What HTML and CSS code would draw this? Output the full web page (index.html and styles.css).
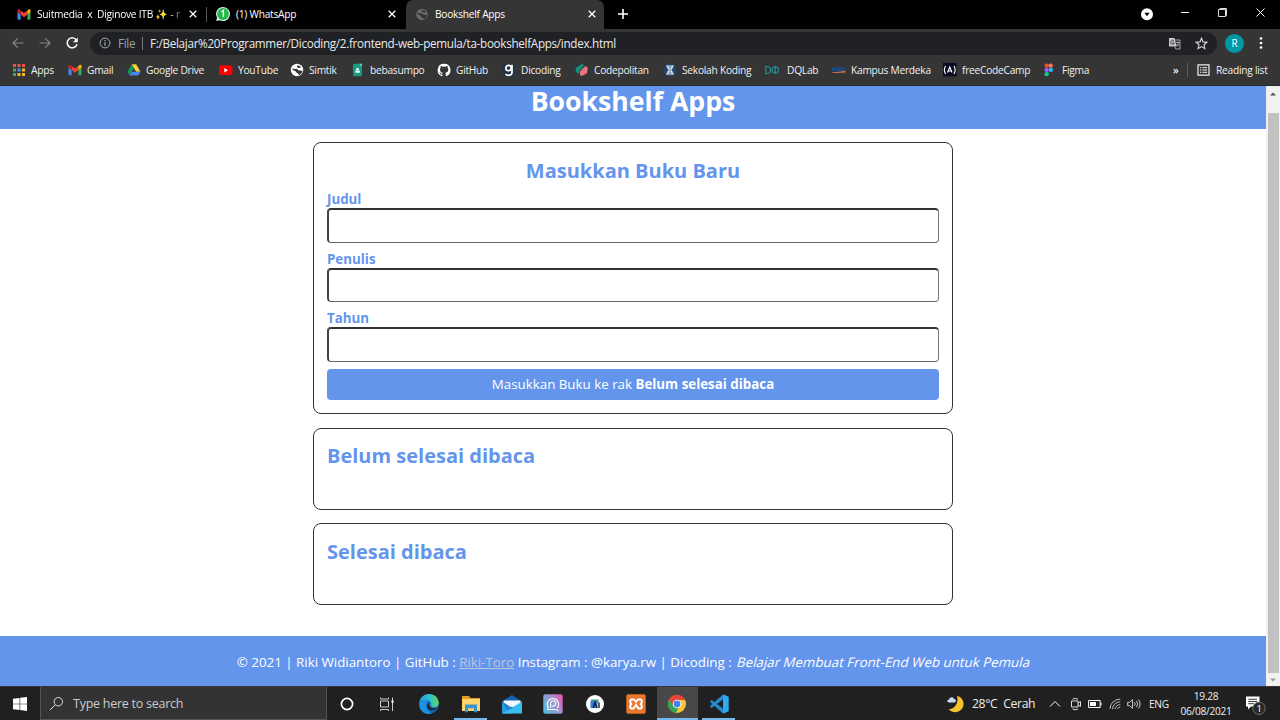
FILE: index.html
```html
<!DOCTYPE html>
<html lang="id">
<head>
<meta charset="utf-8">
<title>Bookshelf Apps</title>
<link rel="stylesheet" href="styles.css">
</head>
<body>
<svg class="defs" aria-hidden="true">
  <symbol id="gmail" viewBox="0 0 14 12"><path fill="#4285f4" d="M.5 3.5 3.6 6v5.2H1.4a.9.9 0 0 1-.9-.9z"/><path fill="#34a853" d="M10.4 6l3.1-2.5v6.8a.9.9 0 0 1-.9.9h-2.2z"/><path fill="#ea4335" d="M3.6 6V2l3.4 2.6L10.4 2v4L7 8.7z"/><path fill="#c5221f" d="M.5 3.8V2.2C.5.7 1.9.4 2.8 1.300l.8.7v4z"/><path fill="#fbbc04" d="M13.5 3.800V2.2c0-1.500-1.400-1.800-2.300-.9l-.8.7v4z"/></symbol>
  <symbol id="globe" viewBox="0 0 14 14"><circle class="globe-disc" cx="7" cy="7" r="6.200"/><path class="globe-land" d="M2.200 5.200c1.200 0 2 1 3.300.7 1.400-.3 1.800.3 2.500 1 1 .9 3.400 0 4.400 1.200-.5 2-1.700 3.400-3.400 4.200-.3-1.100-.6-2-1.900-2.200-1.400-.3-.7-1.600-1.800-2C4 7.600 2.600 7.200 2.200 5.200zM7.200 2.500c1.500-.3 3 .6 3.900 1.700L9 4.900c-1 .2-2.700-1.200-1.800-2.400z"/></symbol>
  <symbol id="close" viewBox="0 0 10 10"><path fill="none" stroke="#fff" stroke-width="1.250" d="M1.700 1.700l6.600 6.600m0-6.600L1.700 8.300"/></symbol>
</svg>

<div class="tabstrip">
  <div class="tab tab-mail"><svg class="ic"><use href="#gmail"/></svg><span class="tab-title fade">Suitmedia &nbsp;x&nbsp; Diginove ITB ✨ - r</span><svg class="x"><use href="#close"/></svg></div>
  <div class="tab tab-wa"><svg class="ic" viewBox="0 0 14 14"><path fill="#d9f5e0" d="M7 0a7 7 0 1 1-3.300 13.200L.2 14l.9-3.400A7 7 0 0 1 7 0z"/><circle cx="7" cy="7" r="5.900" fill="#25b84c"/><path d="M5.600 4.600 7.400 3.500V10" stroke="#fff" stroke-width="1.300" fill="none"/></svg><span class="tab-title">(1) WhatsApp</span><svg class="x"><use href="#close"/></svg></div>
  <div class="tab tab-active"><svg class="ic dim"><use href="#globe"/></svg><span class="tab-title">Bookshelf Apps</span><svg class="x"><use href="#close"/></svg></div>
  <svg class="newtab" viewBox="0 0 12 12"><path d="M6 1v10M1 6h10" stroke="#fff" stroke-width="1.600"/></svg>
  <div class="winctl">
    <svg viewBox="0 0 14 14" class="w-media"><circle cx="7" cy="7.300" r="6" fill="#fff"/><path d="M4.400 5.700h5.200L7 9.200z" fill="#000"/></svg>
    <svg viewBox="0 0 14 14" class="w-min"><path d="M3 6.500h8" stroke="#fff"/></svg>
    <svg viewBox="0 0 14 14" class="w-max"><path d="M2.500 3.500h7v7h-7zM4 3.500V2.500h6.500v7H9.700" fill="none" stroke="#ddd"/></svg>
    <svg viewBox="0 0 14 14" class="w-close"><path d="M3.500 2.500l8 8m0-8l-8 8" stroke="#fff" fill="none"/></svg>
  </div>
</div>

<div class="toolbar">
  <svg class="nav" viewBox="0 0 14 14"><path d="M12.500 7H2M6.700 2.300 2 7l4.700 4.700" fill="none" stroke="#85878a" stroke-width="1.200"/></svg>
  <svg class="nav" viewBox="0 0 14 14"><path d="M1.500 7H12M7.300 2.300 12 7l-4.700 4.700" fill="none" stroke="#85878a" stroke-width="1.200"/></svg>
  <svg class="nav" viewBox="0 0 14 14"><path d="M11.600 4.400A5 5 0 1 0 12 8.300" fill="none" stroke="#fff" stroke-width="1.500"/><path d="M12.700 1.500v4.800H7.900z" fill="#fff"/></svg>
  <div class="omnibox">
    <svg class="info" viewBox="0 0 12 12"><circle cx="6" cy="6" r="4.900" fill="none" stroke="#a5a8ac"/><path d="M6 5.200v3.600M6 3.100v1.100" stroke="#a5a8ac" stroke-width="1.200"/></svg>
    <span class="scheme">File</span><span class="bar"></span><span class="url">F:/Belajar%20Programmer/Dicoding/2.frontend-web-pemula/ta-bookshelfApps/index.html</span>
    <svg class="translate" viewBox="0 0 13 13"><path d="M1 1h5.500l2.200 8.500H1z" fill="#c4c6c9"/><path d="M6.800 3H12v9H7.800l-1-2.500" fill="none" stroke="#a5a7aa"/><path d="M6 4.100A1.900 1.900 0 1 0 6.300 6H4.500" fill="none" stroke="#333" stroke-width=".9"/><path d="M8 5.500h3.300M9.700 4.500v1M10.700 5.700c-.2 1.600-1 2.500-2.200 3.200M8.700 7l2.200 2.500" fill="none" stroke="#c4c6c9" stroke-width=".8"/></svg>
    <svg class="star" viewBox="0 0 13 13"><path d="M6.500 1.200 8 4.900l4 .3-3 2.600.9 3.900-3.400-2.100-3.400 2.100L4 7.800 1 5.200l4-.3z" fill="none" stroke="#d8dadd" stroke-width="1.100"/></svg>
  </div>
  <span class="avatar">R</span>
  <svg class="dots" viewBox="0 0 4 14"><g fill="#fff"><circle cx="2" cy="2.500" r="1.300"/><circle cx="2" cy="7" r="1.300"/><circle cx="2" cy="11.500" r="1.300"/></g></svg>
</div>

<div class="bookmarks">
  <div class="bm"><svg viewBox="0 0 14 14"><g fill="#e65345"><path d="M1 1h3v3H1zM5.500 1h3v3h-3zM10 1h3v3h-3z"/></g><path fill="#4aa35a" d="M1 5.500h3v3H1z"/><path fill="#4a8ff0" d="M5.500 5.500h3v3h-3z"/><path fill="#efb52e" d="M10 5.500h3v3h-3zM10 10h3v3h-3zM5.500 10h3v3h-3z"/><path fill="#4aa35a" d="M1 10h3v3H1z"/></svg>Apps</div>
  <div class="bm"><svg><use href="#gmail"/></svg>Gmail</div>
  <div class="bm"><svg viewBox="0 0 14 14"><path fill="#0f9d58" d="M4.800 1.300 7 5 2.700 12.500.5 8.700z"/><path fill="#ffcd40" d="M4.800 1.300h4.400l4.300 7.400H9.100z"/><path fill="#4285f4" d="M4.900 8.700h8.600l-2.200 3.800H2.700z"/></svg>Google Drive</div>
  <div class="bm"><svg viewBox="0 0 14 14"><rect y="2.300" width="13.500" height="9.800" rx="2.500" fill="#f00"/><path d="M5.300 5v4.400L9 7.200z" fill="#fff"/></svg>YouTube</div>
  <div class="bm"><svg class="bright"><use href="#globe"/></svg>Simtik</div>
  <div class="bm"><svg viewBox="0 0 14 14"><rect x="2" y=".7" width="9" height="12.600" rx="1" fill="#159a80"/><path d="M8 .7h3v3z" fill="#70d0b5"/><path d="M6.500 4.300 8.400 7H4.600zM4.300 7.500h4.500v2.200H4.300z" fill="#e8fff8"/></svg>bebasumpo</div>
  <div class="bm"><svg viewBox="0 0 16 16"><path fill="#fff" d="M8 .8a7.300 7.300 0 0 0-2.300 14.200c.4.100.5-.2.500-.4v-1.400c-2 .4-2.500-.9-2.500-.9-.4-.9-.9-1.100-.9-1.100-.7-.5.100-.5.100-.5.800.1 1.200.8 1.200.8.700 1.200 1.800.8 2.200.6.100-.5.300-.8.500-1-1.700-.2-3.400-.8-3.400-3.600 0-.8.300-1.500.8-2-.1-.2-.4-1 .1-2 0 0 .6-.2 2 .8a7 7 0 0 1 3.700 0c1.400-1 2-.8 2-.8.4 1 .1 1.800.1 2 .5.500.8 1.200.8 2 0 2.800-1.700 3.400-3.400 3.600.3.200.5.700.5 1.400v2.100c0 .2.100.5.500.4A7.300 7.300 0 0 0 8 .8z"/></svg>GitHub</div>
  <div class="bm"><svg viewBox="0 0 14 14"><rect x=".5" y=".5" width="13" height="13" fill="#263449"/><circle cx="6.500" cy="5" r="2.700" fill="none" stroke="#fff" stroke-width="1.700"/><path d="M10 1.700v7.500c0 3.700-4.800 3.800-6.500 2" fill="none" stroke="#fff" stroke-width="1.700"/></svg>Dicoding</div>
  <div class="bm"><svg viewBox="0 0 14 14"><path fill="#178d7c" d="M7 .7 9 2.600 4.200 8.500 3.800 11 .8 9V5z"/><path fill="#e9737e" d="M10.500 2.700 12.800 5 12 10.300 6.300 13.300 4.800 11 5 8.500z"/></svg>Codepolitan</div>
  <div class="bm"><svg viewBox="0 0 14 14"><circle cx="7" cy="7" r="6.500" fill="#20466c"/><path d="M3 3h8M4 5h6M3 11h8M4 9h6M4.500 3l1.700 4-1.700 4M9.500 3 7.800 7l1.700 4" fill="none" stroke="#e6edf4" stroke-width="1.200"/></svg>Sekolah Koding</div>
  <div class="bm bm-dq"><svg viewBox="0 0 17 14"><g fill="none" stroke="#218f93" stroke-width="1.200"><path d="M.8 3.500v7h1.200c4.800 0 4.800-7 0-7z"/><circle cx="10.300" cy="7" r="3.200"/><path d="M10.300 3v8"/></g></svg>DQLab</div>
  <div class="bm"><svg viewBox="0 0 14 14"><path d="M0 4.500h13.500v3.200L0 8.500z" fill="#1d477f"/><path d="M0 9.500 13.500 8v1.500L0 10z" fill="#e67f48"/></svg>Kampus Merdeka</div>
  <div class="bm"><svg viewBox="0 0 14 14"><rect width="13.500" height="13.500" fill="#0a0a23"/><path d="M2.500 3q-2.300 4 0 8M11 3q2.300 4 0 8M4.500 9.500 6.800 4 9 9.500M5.400 8h2.800" fill="none" stroke="#fff" stroke-width="1.100"/></svg>freeCodeCamp</div>
  <div class="bm"><svg viewBox="0 0 14 14"><rect x="1.500" y=".5" width="4.300" height="4.300" rx="2" fill="#f24e1e"/><rect x="5.500" y=".5" width="4.300" height="4.300" rx="2" fill="#ff7262"/><rect x="1.500" y="4.700" width="4.300" height="4.300" rx="2" fill="#a259ff"/><circle cx="7.900" cy="6.900" r="2.100" fill="#1abcfe"/><rect x="1.500" y="9" width="4.300" height="4.300" rx="2" fill="#0acf83"/></svg>Figma</div>
  <div class="more">»</div>
  <div class="bm reading"><svg viewBox="0 0 14 14"><path d="M1 1.800h11v10.400H1z" fill="none" stroke="#eee" stroke-width="1.200"/><path d="M3 4.700h1.500M3 7h1.500M3 9.300h1.500M5.500 4.700h4.600M5.500 7h4.600M5.500 9.300h4.600" stroke="#eee"/></svg>Reading list</div>
</div>

<div class="viewport">
  <div class="page">
    <header class="site-head"><h1>Bookshelf Apps</h1></header>
    <main>
      <section class="card input-card">
        <h2>Masukkan Buku Baru</h2>
        <form>
          <div class="field"><label for="t">Judul</label><input id="t" type="text"></div>
          <div class="field"><label for="a">Penulis</label><input id="a" type="text"></div>
          <div class="field"><label for="y">Tahun</label><input id="y" type="text"></div>
          <button type="button">Masukkan Buku ke rak <b>Belum selesai dibaca</b></button>
        </form>
      </section>
      <section class="card shelf"><h2>Belum selesai dibaca</h2></section>
      <section class="card shelf last"><h2>Selesai dibaca</h2></section>
    </main>
    <footer class="site-foot"><p>© 2021 | Riki Widiantoro | GitHub : <a>Riki-Toro</a> Instagram : @karya.rw | Dicoding : <i>Belajar Membuat Front-End Web untuk Pemula</i></p></footer>
  </div>
  <div class="scroll"><svg viewBox="0 0 14 10"><path d="M4 6.500h6L7 3.500z" fill="#505050"/></svg><div class="thumb"></div><svg viewBox="0 0 14 10"><path d="M4 3.500h6L7 6.500z" fill="#999"/></svg></div>
</div>

<div class="taskbar">
  <div class="start"><svg viewBox="0 0 14 14"><path fill="#fff" d="M0 1.800 6.600.9v5.800H0zM7.200.8 14 0v6.700H7.200zM0 7.300h6.600v5.800L0 12.200zM7.200 7.300H14V14l-6.800-.9z"/></svg></div>
  <div class="search"><svg viewBox="0 0 15 15"><circle cx="9.300" cy="5.700" r="4.200" fill="none" stroke="#ddd"/><path d="M6.300 8.700 1 14" stroke="#ddd"/></svg>Type here to search</div>
  <div class="apps">
    <div class="app"><svg viewBox="0 0 20 20"><circle cx="10" cy="10" r="5.600" fill="none" stroke="#fff" stroke-width="1.700"/></svg></div>
    <div class="app"><svg viewBox="0 0 20 20"><path d="M2.500 7h8v6h-8zM2.500 3.500V5h8V3.500M2.500 17v-1.500h8V17M14.500 3.500V17" fill="none" stroke="#ccc"/><path d="M13.500 6.500h2v2.300h-2z" fill="#fff"/></svg></div>
    <div class="app"><svg viewBox="0 0 20 20"><defs><linearGradient id="eg"><stop stop-color="#259fd9"/><stop offset=".55" stop-color="#2cc3c8"/><stop offset="1" stop-color="#65d559"/></linearGradient></defs><circle cx="10" cy="10" r="9.800" fill="#0c67b4"/><path d="M.3 9C1.500-2.500 18.300-3 19.800 8.500c.4 4.500-5.300 6-7.800 3.500-1-1 .8-1.200-.1-3.300C10 5 3.400 4.500.3 9z" fill="url(#eg)"/><path d="M.3 9c3.500-3.700 7.700-3.800 9.700-2-5.500 2.500-2.300 9.600 2.700 12.400C6.200 21.500-.7 16.500.3 9z" fill="#1d91df"/><path d="M10.500 9c-2 3 1.500 7.700 8 4.300-2.600 3.600-7 3.600-9 1.700-2-2-1.700-5 1-6z" fill="#202020"/></svg></div>
    <div class="app run"><svg viewBox="0 0 20 20"><path d="M1 2h7l1.500 2H19v3H1z" fill="#e59a20"/><path d="M1 5h18v12H1z" fill="#ffd56b"/><path d="M4 18.300V10.500h12v7.800h-3v-4H7v4z" fill="#3994cf"/></svg></div>
    <div class="app"><svg viewBox="0 0 20 20"><path d="M0 7.500 10 1l10 6.500z" fill="#1263b5"/><path d="M1.500 6.500h17V13h-17z" fill="#f3f8fc"/><path d="M0 7.500 10 14v5.500H0z" fill="#2a9ae1"/><path d="M20 7.500v12H0z" fill="#39bdf1"/><path d="M0 7.500 8 12.700 10 14l-4.500 2.500z" fill="#1e83d1"/></svg></div>
    <div class="app"><svg viewBox="0 0 20 20"><defs><linearGradient id="pg" y1=".6" x2="1" y2="0"><stop stop-color="#59b8de"/><stop offset=".55" stop-color="#a98bcb"/><stop offset="1" stop-color="#e84fab"/></linearGradient></defs><rect x=".3" y=".3" width="19.400" height="19.400" rx="2" fill="url(#pg)"/><path d="M5.500 14.500c-3-5 0-10 4.500-10s7.500 5 4.200 9.700M7.700 14V9c0-3 5-3 5 .4 0 3-2.500 3-3.500 2.300M4 15.500h7c3 0 4 1 4.500 1.500" fill="none" stroke="#fff" stroke-width="1.100"/></svg></div>
    <div class="app"><svg viewBox="0 0 20 20"><circle cx="10" cy="10" r="9" fill="#fff"/><path d="M6 5.500h7.500V9H6z" fill="#3ba66b"/><path d="M5.500 7h7v7h-7z" fill="#337be0"/><path d="m8.300 14 1.600-5.700 2 5.700M14 8.500V14" fill="none" stroke="#123" stroke-width="1.400"/></svg></div>
    <div class="app"><svg viewBox="0 0 20 20"><rect x=".3" y=".3" width="19.400" height="19.400" rx="2" fill="#e9762b"/><path d="M8 5.500H5.700q-1.500 0-1.500 2T6 10q-1.800.3-1.800 2.500t1.500 2H7.500L10 11l2.500 3.500h1.800q1.500 0 1.500-2T14 10q1.800-.3 1.800-2.500t-1.500-2H12L10 8z" fill="none" stroke="#fff" stroke-width="2"/></svg></div>
    <div class="app active run"><svg viewBox="0 0 20 20"><circle cx="10" cy="10" r="9" fill="#fbc634"/><path d="M2.200 5.500A9 9 0 0 1 18 6H10l-4 6z" fill="#e94335"/><path d="M2.200 5.500 6.500 12l5 2-2.400 5A9 9 0 0 1 2.200 5.500z" fill="#35a451"/><circle cx="10" cy="10" r="4.300" fill="#fff"/><circle cx="10" cy="10" r="3.400" fill="#4385f4"/></svg></div>
    <div class="app run"><svg viewBox="0 0 20 20"><path d="m14 .5 5.500 2.300v14.400L14 19.500.7 7.700 2.700 6 14 14.500z" fill="#2189ca"/><path d="M14 .5v5L2.700 14 .7 12.300z" fill="#2489cb"/><path d="m14 .5 5.500 2.300v14.400L14 19.500z" fill="#30a9f0"/></svg></div>
  </div>
  <div class="tray">
    <svg class="moon" viewBox="0 0 18 18"><path d="M10 .8A8.300 8.300 0 1 1 1.700 14C8 14.500 12 7 10 .8z" fill="#f6c52b"/><path d="M2 7.500C-.5 7.300 0 4.300 2.200 4.500 2.500 1.500 6.500 1.500 7 4c2.500 0 2.500 3.500 0 3.500z" fill="#c6def3"/></svg>
    <span class="temp">28°C&ensp;Cerah</span>
    <svg class="chev" viewBox="0 0 12 12"><path d="m1 8.500 5-5 5 5" fill="none" stroke="#fff"/></svg>
    <svg class="meet" viewBox="0 0 12 14"><path d="M1.500 4h6.500v6H1.500zM8 6l2.500-1.500v5L8 8M2.500 2.300q2.500-1.800 5.500 0M2.500 12q2.500 1.700 5.500 0" fill="none" stroke="#ddd"/></svg>
    <svg class="batt" viewBox="0 0 14 10"><path d="M.6 1.500h11.500v7H.6z" fill="none" stroke="#fff"/><path d="M2 3h6v4H2z" fill="#fff"/><path d="M13 3.500v3" stroke="#fff"/></svg>
    <svg class="wifi" viewBox="0 0 12 12"><path d="M1 11Q1.500 2 11.300 1M3.500 11Q4 4.600 11.300 3.700M6 11q.5-3.700 5.300-4.500M8.500 11q.3-1.500 2.800-2" fill="none" stroke="#bbb"/></svg>
    <svg class="vol" viewBox="0 0 14 12"><path d="M.7 4.300h2L5.500 1.700v8.600L2.700 7.700h-2zM7.500 4.200q1.300 1.800 0 3.600M9.500 2.800q2.300 3.200 0 6.400M11.500 1.500q3.200 4.500 0 9" fill="none" stroke="#ddd" stroke-width=".9"/></svg>
    <span class="lang">ENG</span>
    <div class="clock"><span>19.28</span><span>06/08/2021</span></div>
    <svg class="note" viewBox="0 0 22 22"><path d="M1 3.500h13.500v10H6l-3 3v-3H1z" fill="#fff"/><path d="M3.300 6.300H12M3.300 8.500H12M3.300 10.700H9" stroke="#222" stroke-width=".9"/><circle cx="14" cy="15.300" r="6.200" fill="#292929" stroke="#777" stroke-width=".9"/><text class="badge" x="14" y="18.800" text-anchor="middle">1</text></svg>
  </div>
</div>
</body>
</html>
```

FILE: styles.css
```css
* { box-sizing: border-box; }
body { margin: 0; width: 1280px; height: 720px; overflow: hidden; display: flex; flex-direction: column; background: #fff; font-family: "Open Sans", "Noto Sans", sans-serif; }
svg { display: block; flex: none; }
.defs { width: 0; height: 0; position: absolute; }

/* browser tabs */
.tabstrip { height: 29px; flex: none; background: #000; display: flex; color: #fff; font-size: 10.2px; letter-spacing: -.25px; }
.tab { display: flex; align-items: center; height: 28px; white-space: nowrap; }
.tab .ic { width: 14px; height: 13px; margin-right: 6px; }
.tab .x { width: 10px; height: 10px; }
.tab-title { flex: 1; overflow: hidden; }
.fade { -webkit-mask-image: linear-gradient(90deg, #000 90%, transparent 103%); mask-image: linear-gradient(90deg, #000 90%, transparent 103%); margin-right: 5px; }
.tab-mail { width: 207px; padding: 0 9px 0 17px; position: relative; }
.tab-mail .tab-title { letter-spacing: -.25px; }
.tab-mail::after { content: ""; position: absolute; right: 0; top: 7px; width: 1px; height: 15px; background: #555; }
.tab-wa { width: 199px; padding: 0 9px; }
.tab-wa .ic, .tab-wa .ic + * { height: 14px; line-height: 14px; }
.tab-active { width: 198px; height: 29px; padding: 0 7px 1px 9px; background: #353535; border-radius: 7px 7px 0 0; }
.newtab { width: 12px; height: 12px; margin: 8px 0 0 13px; }
.winctl { margin-left: auto; display: flex; padding: 6px 13px 0 0; }
.winctl svg { width: 14px; height: 14px; }
.w-media { margin: 1px 24px 0 0; }
.w-min { margin-right: 24px; }
.w-max { margin-right: 23px; }
.dim .globe-disc, .dim { fill: #66696d; }
.globe-disc { fill: inherit; }
.globe-land { fill: #333; }
.bright { fill: #fff; }

/* address row */
.toolbar { height: 29px; flex: none; background: #353535; display: flex; align-items: center; padding: 0 0 1px 11px; }
.nav { width: 14px; height: 14px; margin-right: 13px; }
.nav:nth-child(3) { margin-right: 11px; }
.omnibox { width: 1127px; height: 23px; border-radius: 12px; background: #202124; display: flex; align-items: center; padding: 0 9px 0 9px; font-size: 11.7px; letter-spacing: -.305px; color: #e8eaed; white-space: nowrap; }
.info { width: 12px; height: 12px; margin-right: 7px; }
.scheme { width: 24px; color: #9aa0a6; }
.bar { width: 1px; height: 13px; background: #77797c; margin-right: 7px; }
.translate { width: 13px; height: 13px; margin: 0 14px 0 auto; }
.star { width: 13px; height: 13px; }
.avatar { width: 19px; height: 19px; margin: 0 15px 0 8px; border-radius: 50%; background: #0097a7; color: #fff; text-align: center; font-size: 10px; line-height: 19px; }
.dots { width: 4px; height: 14px; }

/* bookmarks */
.bookmarks { height: 28px; flex: none; background: #353535; border-bottom: 1px solid #292a2d; padding: 0 0 3px 12px; display: grid; grid-template-columns: 56px 59px 92px 71px 61px 86px 65px 73px 88px 102px 67px 111px 100px 130px 14px 1fr; align-items: center; color: #f1f1f1; font-size: 10.2px; letter-spacing: -.25px; white-space: nowrap; }
.bm { display: flex; align-items: center; gap: 5px; }
.bm svg { width: 14px; height: 14px; }
.bm-dq svg { width: 17px; }
.more { font-weight: 600; line-height: 12px; }
.reading { border-left: 1px solid #5c5c5c; height: 14px; padding-left: 9px; }

/* web page */
.viewport { height: 600px; flex: none; display: flex; }
.page { width: 1266px; display: flex; flex-direction: column; }
.site-head { height: 43px; background: cornflowerblue; color: #fff; text-align: center; }
.site-head h1 { margin: 0; font-size: 26.67px; line-height: 30px; }
main { height: 507px; width: 640px; margin: 0 auto; padding-top: 13.500px; }
.card { border: 1px solid #333; border-radius: 8px; padding: 13px; margin-bottom: 13.500px; }
.card h2 { margin: 0; color: cornflowerblue; font-size: 20px; line-height: 28px; }
.input-card { height: 272px; }
.input-card h2 { text-align: center; line-height: 29px; }
.shelf { height: 82px; }
.last h2 { line-height: 29px; }
.field { height: 59.300px; padding-top: 5px; color: cornflowerblue; font-size: 13.33px; font-weight: 700; }
.field label { display: block; height: 18px; line-height: 19px; }
.field input { display: block; width: 100%; height: 34.500px; border: 1px solid; border-width: 2px 1px 1px 2px; border-color: #333 #777 #666 #444; border-radius: 4px; background: #fff; outline: none; }
.input-card button { display: block; width: 100%; height: 31px; margin-top: 6px; padding: 0 0 2px; border: 0; border-radius: 4px; background: cornflowerblue; color: #fff; font: 13.33px "Open Sans", sans-serif; }
.site-foot { height: 50.500px; background: cornflowerblue; color: #fff; text-align: center; font-size: 13.33px; }
.site-foot p { margin: 0; line-height: 52px; white-space: nowrap; }
.site-foot a { color: #bdc6dc; text-decoration: underline; }
.site-foot i { display: inline-block; font-style: normal; transform: skewX(-14deg); transform-origin: 0 60%; padding-left: 1px; }
.scroll { width: 14px; background: #f1f1f1; display: flex; flex-direction: column; justify-content: space-between; padding: 3px 0 1px; }
.scroll svg { width: 14px; height: 10px; }
.thumb { width: 11px; height: 560px; margin: 12px 0 0 2px; background: #c1c1c1; }

/* taskbar */
.taskbar { height: 34px; flex: none; background: #202020; border-top: 1px solid #38383c; display: flex; color: #eee; }
.start { width: 40px; display: grid; place-items: center; }
.start svg { width: 14px; height: 14px; }
.search { width: 287px; background: #333; border: solid #555; border-width: 0 1px 1px; display: flex; align-items: center; gap: 9px; padding-left: 8px; font-size: 12.500px; letter-spacing: -.25px; color: #ccc; }
.search svg { width: 15px; height: 15px; }
.apps { display: grid; grid-template-columns: repeat(10, 41.350px); margin-left: -1px; }
.app { display: grid; place-items: center; position: relative; }
.app svg { width: 20px; height: 20px; }
.run::after { content: ""; position: absolute; left: 4px; right: 4px; bottom: 0; height: 2px; background: #76b9ed; }
.active { background: #484848; }
.active::after { left: 0; right: 0; }
.tray { margin-left: auto; display: flex; align-items: center; padding-right: 13px; font-size: 10.200px; letter-spacing: -.3px; white-space: nowrap; }
.moon { width: 18px; height: 18px; margin-right: 7px; }
.temp { width: 77px; font-size: 12.200px; letter-spacing: -.35px; }
.chev { width: 12px; height: 12px; margin-right: 9px; }
.meet { width: 12px; height: 14px; margin-right: 6px; }
.batt { width: 14px; height: 10px; margin-right: 7px; }
.wifi { width: 12px; height: 12px; margin-right: 6px; }
.vol { width: 14px; height: 12px; margin-right: 8px; }
.lang { width: 31px; }
.clock { width: 52px; margin-right: 13px; display: flex; flex-direction: column; align-items: center; line-height: 15px; }
.note { width: 22px; height: 22px; }
.badge { fill: #fff; font: 9.500px "Open Sans", sans-serif; }
```
